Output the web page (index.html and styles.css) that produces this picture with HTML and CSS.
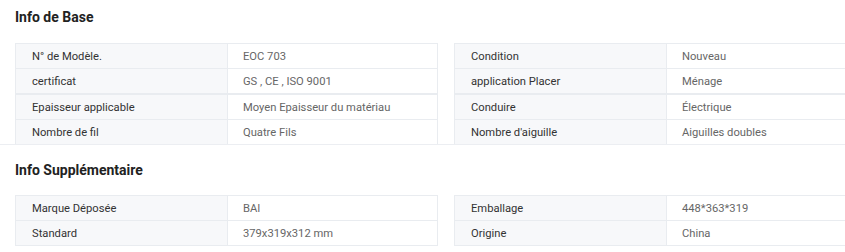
FILE: index.html
```html
<!DOCTYPE html>
<html lang="fr">
<head>
<meta charset="utf-8">
<link rel="stylesheet" href="styles.css">
</head>
<body>
<div class="page">
  <section class="section first">
    <h3 class="title">Info de Base</h3>
    <div class="tables">
      <div class="table">
        <div class="row"><div class="label">N° de Modèle.</div><div class="value">EOC 703</div></div>
        <div class="row"><div class="label">certificat</div><div class="value">GS , CE , ISO 9001</div></div>
        <div class="row thick"><div class="label">Epaisseur applicable</div><div class="value">Moyen Epaisseur du matériau</div></div>
        <div class="row"><div class="label">Nombre de fil</div><div class="value">Quatre Fils</div></div>
      </div>
      <div class="table">
        <div class="row"><div class="label">Condition</div><div class="value">Nouveau</div></div>
        <div class="row"><div class="label">application Placer</div><div class="value">Ménage</div></div>
        <div class="row thick"><div class="label">Conduire</div><div class="value">Électrique</div></div>
        <div class="row"><div class="label">Nombre d'aiguille</div><div class="value">Aiguilles doubles</div></div>
      </div>
    </div>
  </section>
  <section class="section second">
    <h3 class="title">Info Supplémentaire</h3>
    <div class="tables">
      <div class="table">
        <div class="row"><div class="label">Marque Déposée</div><div class="value">BAI</div></div>
        <div class="row"><div class="label">Standard</div><div class="value">379x319x312 mm</div></div>
      </div>
      <div class="table">
        <div class="row"><div class="label">Emballage</div><div class="value">448*363*319</div></div>
        <div class="row"><div class="label">Origine</div><div class="value">China</div></div>
      </div>
    </div>
  </section>
</div>
</body>
</html>
```
FILE: styles.css
```css
* { box-sizing: border-box; }
html, body { margin: 0; padding: 0; background: #fff; }
body {
  font-family: Roboto, "Liberation Sans", Arial, sans-serif;
}
.page {
  width: 845px;
  height: 252px;
  overflow: hidden;
}
.section { padding-left: 15px; }
.section.first { padding-top: 7px; border-bottom: 1px solid #eceef2; }
.section.second { padding-top: 15px; }
.title {
  margin: 0 0 16px 0;
  font-size: 14px;
  line-height: 20px;
  font-weight: 700;
  color: #222;
}
.section.second .title { margin-bottom: 15px; }
.tables {
  display: grid;
  grid-template-columns: 423px 423px;
  column-gap: 16px;
}
.table {
  border-left: 1px solid #e9ecf0;
  border-right: 1px solid #e9ecf0;
}
.section.second .table { border-bottom: 1px solid #e9ecf0; }
.row {
  display: grid;
  grid-template-columns: 212px 1fr;
  height: 25px;
  border-top: 1px solid #e9ecf0;
  font-size: 11.2px;
}
.row.thick { height: 26px; border-top: 2px solid #e9ecf0; }
.label {
  background: #f7f8fa;
  color: #333;
  padding-left: 16px;
  display: flex;
  align-items: center;
  border-right: 1px solid #e9ecf0;
}
.value {
  color: #666;
  padding-left: 15px;
  display: flex;
  align-items: center;
  white-space: nowrap;
}
```
